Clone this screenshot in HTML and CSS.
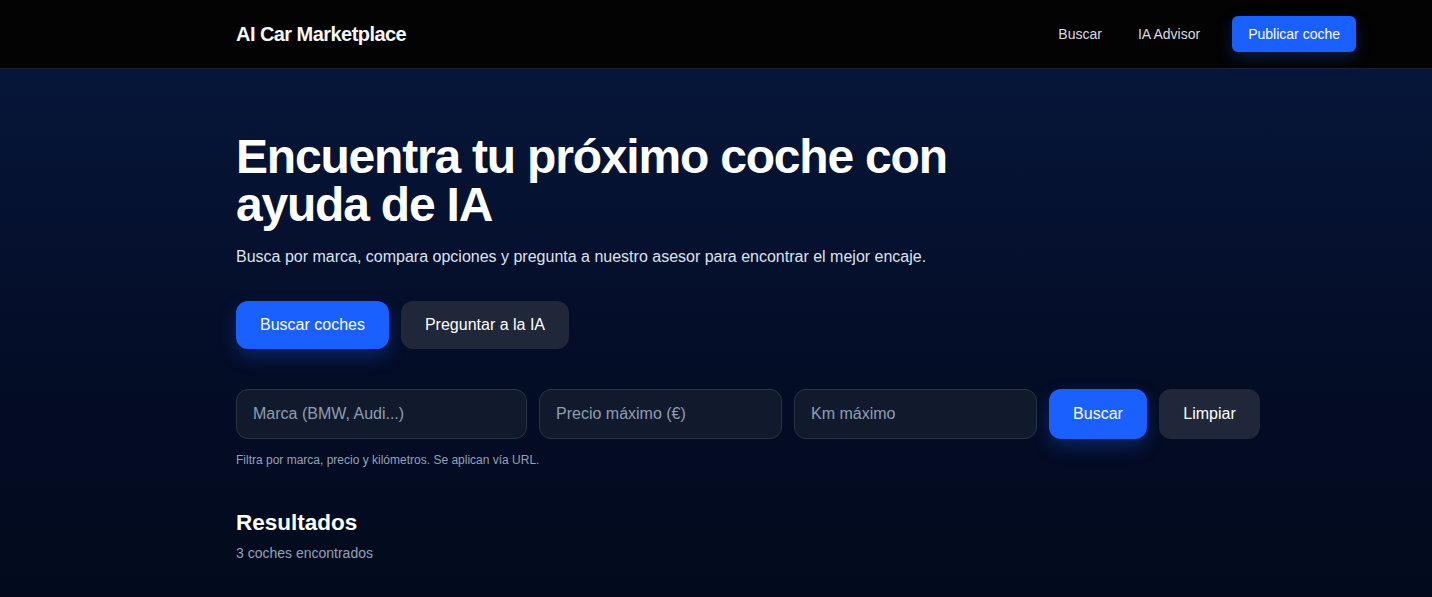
FILE: index.html
```html
<!DOCTYPE html>
<html lang="es">
<head>
    <meta charset="UTF-8">
    <meta name="viewport" content="width=device-width, initial-scale=1.0">
    <title>AI Car Marketplace</title>
    <link rel="stylesheet" href="styles.css">
</head>
<body>
    <header class="topbar">
        <div class="topbar-inner">
            <a class="brand" href="#">AI Car Marketplace</a>
            <nav class="nav">
                <a href="#">Buscar</a>
                <a href="#">IA Advisor</a>
                <a class="btn-publish" href="#">Publicar coche</a>
            </nav>
        </div>
    </header>

    <main class="hero">
        <div class="container">
            <h1>Encuentra tu próximo coche con ayuda de IA</h1>
            <p class="lead">Busca por marca, compara opciones y pregunta a nuestro asesor para encontrar el mejor encaje.</p>

            <div class="actions">
                <button class="btn btn-primary">Buscar coches</button>
                <button class="btn btn-dark">Preguntar a la IA</button>
            </div>

            <form class="filters" onsubmit="return false">
                <input type="text" placeholder="Marca (BMW, Audi...)">
                <input type="text" placeholder="Precio máximo (€)">
                <input type="text" placeholder="Km máximo">
                <button class="btn btn-primary btn-small" type="submit">Buscar</button>
                <button class="btn btn-dark btn-small" type="reset">Limpiar</button>
            </form>
            <p class="hint">Filtra por marca, precio y kilómetros. Se aplican vía URL.</p>

            <section class="results">
                <h2>Resultados</h2>
                <p class="count">3 coches encontrados</p>
            </section>
        </div>
    </main>
</body>
</html>
```

FILE: styles.css
```css
* { box-sizing: border-box; }
html, body { height: 100%; }
body { margin: 0; font-family: "Liberation Sans", Arial, sans-serif; color: #fff; background: #020817; }
a { text-decoration: none; color: inherit; }

.topbar { background: #030303; border-bottom: 1px solid #1f2328; height: 69px; }
.topbar-inner { height: 68px; display: flex; align-items: center; justify-content: space-between; padding: 0 76px 0 236px; }
.brand { font-size: 20px; font-weight: bold; color: #f5f7fb; letter-spacing: -0.55px; }
.nav { display: flex; align-items: center; gap: 36px; font-size: 14px; }
.nav a { color: #d7dbe2; }
.nav .btn-publish { margin-left: -4px; background: #1a5fff; color: #fff; padding: 0 16px; height: 36px; line-height: 36px; border-radius: 6px; box-shadow: 0 6px 16px rgba(26, 95, 255, 0.25); }

.hero { min-height: calc(100% - 69px); background: linear-gradient(180deg, #061639 0%, #040d27 55%, #020a1c 100%); }
.container { padding: 64px 0 40px 236px; max-width: 1260px; }

h1 { margin: 0; font-size: 48px; line-height: 48px; font-weight: bold; letter-spacing: -1.2px; max-width: 740px; }
.lead { margin: 19px 0 0; font-size: 16px; color: #dde3ec; }

.actions { display: flex; gap: 12px; margin-top: 35px; }
.btn { font-family: inherit; font-size: 16px; border: none; border-radius: 12px; height: 48px; padding: 0 24px; color: #fff; cursor: pointer; }
.btn-primary { background: #1a5fff; box-shadow: 0 8px 18px rgba(26, 95, 255, 0.28); }
.btn-dark { background: #1f2739; }

.filters { display: grid; grid-template-columns: 291px 243px 243px 98px 101px; gap: 12px; margin-top: 40px; }
.filters input { height: 50px; background: #111a2d; border: 1px solid #2a3346; border-radius: 12px; padding: 0 16px; font-family: inherit; font-size: 16px; color: #fff; outline: none; }
.filters input::placeholder { color: #8f9db1; }
.btn-small { height: 50px; padding: 0; }

.hint { margin: 14px 0 0; font-size: 12px; color: #93a2b8; }

.results { margin-top: 43px; }
.results h2 { margin: 0; font-size: 22.5px; font-weight: bold; }
.count { margin: 9px 0 0; font-size: 14px; color: #93a2b8; }
```
